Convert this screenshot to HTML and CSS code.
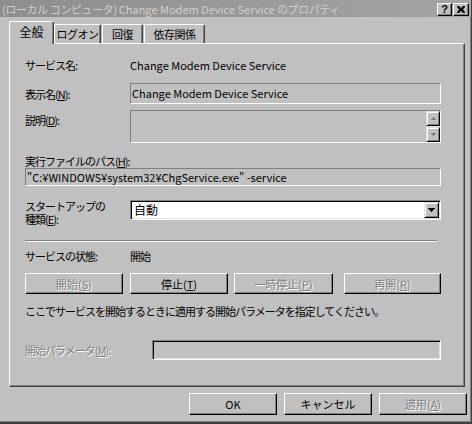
FILE: index.html
```html
<!DOCTYPE html>
<html lang="ja">
<head>
    <meta charset="UTF-8">
    <title>Change Modem Device Service のプロパティ</title>
    <link rel="stylesheet" href="styles.css">
</head>
<body>
    <div class="window">
        <div class="titlebar">
            <span class="title">(ローカル コンピュータ) <span class="latin">Change Modem Device Service</span> のプロパティ</span>
            <div class="caption-buttons">
                <span class="cap-btn help">?</span>
                <span class="cap-btn close">
                    <svg width="8" height="7" viewBox="0 0 8 7"><path d="M0 0h2l2 2 2-2h2v1L6 3.5 8 6v1H6L4 5 2 7H0V6l2-2.5L0 1z" fill="#000"/></svg>
                </span>
            </div>
        </div>

        <div class="tabs">
            <div class="tab active">全般</div>
            <div class="tab">ログオン</div>
            <div class="tab">回復</div>
            <div class="tab">依存関係</div>
        </div>

        <div class="panel">
            <div class="row row-name">
                <span class="label">サービス名:</span>
                <span class="value latin">Change Modem Device Service</span>
            </div>

            <div class="row row-display">
                <span class="label">表示名(<u>N</u>):</span>
                <div class="edit readonly latin">Change Modem Device Service</div>
            </div>

            <div class="row row-desc">
                <span class="label">説明(<u>D</u>):</span>
                <div class="edit readonly memo">
                    <div class="scroll">
                        <span class="scroll-btn"><svg width="5" height="3" viewBox="0 0 5 3"><path d="M2 0h1v1h1v1h1v1H0V2h1V1h1z" fill="#808080"/></svg></span>
                        <span class="scroll-track"></span>
                        <span class="scroll-btn"><svg width="5" height="3" viewBox="0 0 5 3"><path d="M0 0h5v1H4v1H3v1H2V2H1V1H0z" fill="#808080"/></svg></span>
                    </div>
                </div>
            </div>

            <div class="label path-label">実行ファイルのパス(<u>H</u>):</div>
            <div class="edit readonly path latin">"C:¥WINDOWS¥system32¥ChgService.exe" -service</div>

            <div class="row row-startup">
                <span class="label two-line">スタートアップの<br>種類(<u>E</u>):</span>
                <div class="combo">
                    <span class="combo-text">自動</span>
                    <span class="combo-btn"><svg width="7" height="4" viewBox="0 0 7 4"><path d="M0 0h7v1H6v1H5v1H4v1H3V3H2V2H1V1H0z" fill="#000"/></svg></span>
                </div>
            </div>

            <div class="separator"></div>

            <div class="row row-status">
                <span class="label">サービスの状態:</span>
                <span class="value">開始</span>
            </div>

            <div class="service-buttons">
                <button class="btn disabled">開始(<u>S</u>)</button>
                <button class="btn">停止(<u>T</u>)</button>
                <button class="btn disabled">一時停止(<u>P</u>)</button>
                <button class="btn disabled">再開(<u>R</u>)</button>
            </div>

            <div class="hint">ここでサービスを開始するときに適用する開始パラメータを指定してください。</div>

            <div class="row row-params">
                <span class="label disabled-text">開始パラメータ(<u>M</u>):</span>
                <div class="edit sunken"></div>
            </div>
        </div>

        <div class="footer">
            <button class="btn latin">OK</button>
            <button class="btn">キャンセル</button>
            <button class="btn disabled">適用(<u>A</u>)</button>
        </div>
    </div>
</body>
</html>
```

FILE: styles.css
```css
/* Classic property sheet dialog */
* {
    box-sizing: border-box;
}

body {
    margin: 0;
    width: 472px;
    height: 424px;
    overflow: hidden;
    background: #c0c0c0;
    font-family: "Noto Sans CJK JP", "Liberation Sans", sans-serif;
    font-size: 11px;
    line-height: 14px;
    letter-spacing: -1px;
    color: #000;
}

/* latin strings keep normal tracking */
.latin {
    letter-spacing: 0;
}

u {
    text-decoration: underline;
    text-underline-offset: 1px;
}

.window {
    width: 472px;
    height: 424px;
    border-right: 1px solid #404040;
    border-bottom: 2px solid #404040;
    box-shadow: inset -1px -1px 0 #808080;
}

/* title bar (inactive) */
.titlebar {
    height: 17px;
    display: flex;
    align-items: center;
    justify-content: space-between;
    padding: 0 2px 0 2px;
    background: linear-gradient(to right, #8e8e8e, #a4a4a4);
    color: #cfcfcf;
}

.title {
    white-space: nowrap;
    font-size: 11px;
    letter-spacing: -0.4px;
}

.caption-buttons {
    display: flex;
    gap: 1px;
    margin-top: 1px;
}

.cap-btn {
    width: 15px;
    height: 13px;
    display: flex;
    align-items: center;
    justify-content: center;
    background: #c0c0c0;
    border: 1px solid;
    border-color: #fff #000 #000 #fff;
    box-shadow: inset -1px -1px 0 #808080;
}

.cap-btn.close {
    width: 16px;
}

.help {
    font-family: "Liberation Sans", sans-serif;
    font-weight: bold;
    font-size: 11px;
    line-height: 11px;
    letter-spacing: 0;
    color: #000;
}

/* tabs */
.tabs {
    display: flex;
    align-items: flex-end;
    height: 22px;
    margin-top: 4px;
    padding-left: 9px;
    position: relative;
    z-index: 1;
}

.tab {
    height: 19px;
    padding-top: 2px;
    text-align: center;
    white-space: nowrap;
    letter-spacing: -0.5px;
    border-left: 1px solid #fff;
    border-top: 1px solid #fff;
    border-right: 1px solid #404040;
    box-shadow: inset -1px 0 0 #808080;
    border-radius: 2px 2px 0 0;
}

.tab:nth-child(2) { width: 47px; }
.tab:nth-child(3) { width: 41px; margin-left: 1px; }
.tab:nth-child(4) { width: 61px; margin-left: 1px; }

.tab.active {
    width: 45px;
    height: 23px;
    margin-bottom: -1px;
    padding-top: 3px;
    font-size: 12px;
    letter-spacing: 0;
    background: #c0c0c0;
}

/* page */
.panel {
    width: 456px;
    height: 344px;
    margin-left: 9px;
    padding: 14px 0 0 15px;
    border-top: 1px solid #fff;
    border-left: 1px solid #fff;
    border-right: 1px solid #404040;
    border-bottom: 1px solid #404040;
    box-shadow: inset -1px -1px 0 #808080;
    display: flex;
    flex-direction: column;
}

.row {
    display: flex;
    align-items: center;
}

.label {
    width: 105px;
    flex-shrink: 0;
    white-space: nowrap;
}

.value {
    white-space: nowrap;
}

.edit {
    height: 21px;
    width: 311px;
    padding: 2px 2px 0 1px;
    white-space: nowrap;
    border: 1px solid;
    border-color: #808080 #fff #fff #808080;
}

.row-display {
    margin-top: 11px;
}

.row-desc {
    margin-top: 6px;
    align-items: flex-start;
}

.row-desc .label {
    margin-top: 3px;
}

.memo {
    height: 33px;
    display: flex;
    justify-content: flex-end;
    padding: 0;
}

.scroll {
    width: 14px;
    display: flex;
    flex-direction: column;
}

.scroll-btn {
    height: 15px;
    display: flex;
    align-items: center;
    justify-content: center;
    background: #c0c0c0;
    border: 1px solid;
    border-color: #dfdfdf #000 #000 #dfdfdf;
    box-shadow: inset 1px 1px 0 #fff, inset -1px -1px 0 #808080;
}

.scroll-track {
    flex: 1;
    background: repeating-conic-gradient(#fff 0 25%, #c0c0c0 0 50%) 0 0 / 2px 2px;
}

.path-label {
    margin-top: 11px;
}

.edit.path {
    width: 416px;
    height: 18px;
    padding-top: 1px;
}

.row-startup {
    margin-top: 14px;
    height: 20px;
    align-items: flex-start;
}

.two-line {
    line-height: 13px;
}

.combo {
    width: 311px;
    height: 20px;
    display: flex;
    align-items: center;
    justify-content: space-between;
    background: #fff;
    border: 1px solid;
    border-color: #808080 #fff #fff #808080;
    box-shadow: inset 1px 1px 0 #000, inset -1px -1px 0 #dfdfdf;
    padding: 0 1px 0 3px;
}

.combo-text {
    font-size: 12px;
    letter-spacing: 0;
}

.combo-btn {
    width: 15px;
    height: 16px;
    display: flex;
    align-items: center;
    justify-content: center;
    background: #c0c0c0;
    border: 1px solid;
    border-color: #dfdfdf #000 #000 #dfdfdf;
    box-shadow: inset 1px 1px 0 #fff, inset -1px -1px 0 #808080;
}

.separator {
    width: 412px;
    height: 2px;
    margin-top: 20px;
    border-top: 1px solid #808080;
    border-bottom: 1px solid #fff;
}

.row-status {
    margin-top: 7px;
}

/* push buttons */
.btn {
    font: inherit;
    color: #000;
    background: #c0c0c0;
    padding: 0;
    border: 1px solid;
    border-color: #fff #000 #000 #fff;
    box-shadow: inset -1px -1px 0 #808080;
    white-space: nowrap;
}

.btn.disabled,
.disabled-text {
    color: #808080;
    text-shadow: 1px 1px 0 #fff;
}

.service-buttons {
    display: flex;
    margin-top: 10px;
}

.service-buttons .btn {
    width: 98px;
    height: 21px;
}

.service-buttons .btn:nth-child(2) { margin-left: 7px; }
.service-buttons .btn:nth-child(3) { margin-left: 6px; width: 99px; }
.service-buttons .btn:nth-child(4) { margin-left: 11px; width: 97px; }

.hint {
    margin-top: 10px;
    white-space: nowrap;
}

.row-params {
    margin-top: 22px;
}

.row-params .label {
    width: 127px;
}

.edit.sunken {
    width: 289px;
    height: 20px;
    box-shadow: inset 1px 1px 0 #000, inset -1px -1px 0 #dfdfdf;
}

/* dialog buttons */
.footer {
    display: flex;
    margin-top: 6px;
    padding-left: 189px;
}

.footer .btn {
    width: 88px;
    height: 22px;
}

.footer .btn + .btn {
    margin-left: 7px;
}
```
